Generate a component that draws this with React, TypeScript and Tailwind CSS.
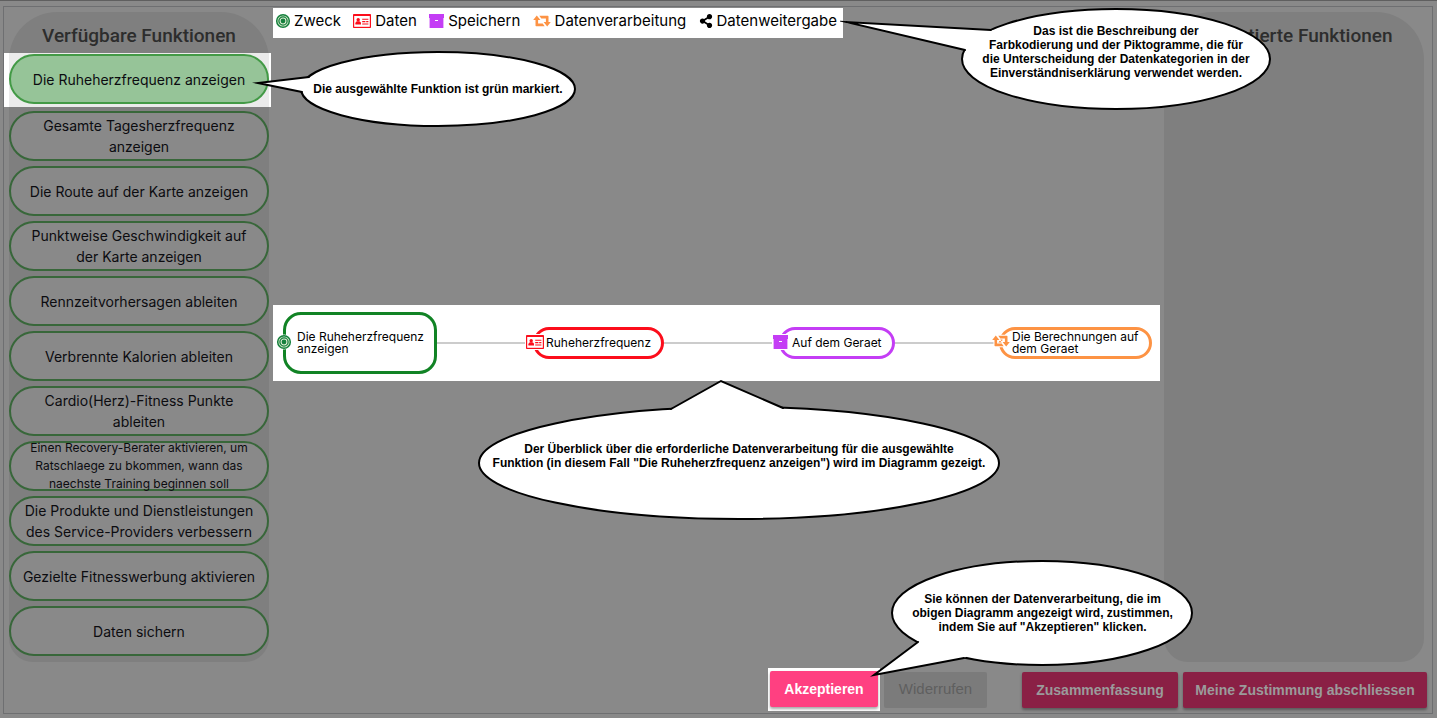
import type { ReactNode } from "react";
import { FaShareAlt } from "react-icons/fa";

const functions = [
  { label: "Gesamte Tagesherzfrequenz anzeigen" },
  { label: "Die Route auf der Karte anzeigen" },
  { label: "Punktweise Geschwindigkeit auf der Karte anzeigen" },
  { label: "Rennzeitvorhersagen ableiten" },
  { label: "Verbrennte Kalorien ableiten" },
  { label: "Cardio(Herz)-Fitness Punkte ableiten" },
  {
    label:
      "Einen Recovery-Berater aktivieren, um Ratschlaege zu bkommen, wann das naechste Training beginnen soll",
    small: true,
  },
  { label: "Die Produkte und Dienstleistungen des Service-Providers verbessern" },
  { label: "Gezielte Fitnesswerbung aktivieren" },
  { label: "Daten sichern" },
];

function TargetIcon() {
  return (
    <svg viewBox="0 0 14 14" className="size-3.5 shrink-0 overflow-visible" aria-hidden="true">
      <circle cx="7" cy="7" r="7.4" fill="#fff" />
      <circle cx="7" cy="7" r="6.3" fill="#d3e6c8" stroke="#15803d" strokeWidth="1.5" />
      <circle cx="7" cy="7" r="4.1" fill="#e4efd8" stroke="#15803d" strokeWidth="1.3" />
      <circle cx="7" cy="7" r="2.4" fill="#15803d" />
    </svg>
  );
}

function CardIcon() {
  return (
    <svg viewBox="0 0 18 14" className="h-3.5 w-4.5 shrink-0" aria-hidden="true">
      <rect width="18" height="14" rx="0.8" fill="#fc0d1b" />
      <rect x="1.2" y="2" width="15.6" height="10.8" fill="#fff" />
      <circle cx="5.2" cy="5.7" r="1.7" fill="#fc0d1b" />
      <path d="M2.4 10.6V9.3q0-1.7 1.6-2h2.4q1.6.3 1.6 2v1.3z" fill="#fc0d1b" />
      <path d="M9.2 5.2h6.2M9.2 7.6h3.2M13.2 7.6h2.2M9.2 10h6.2" stroke="#fc0d1b" strokeWidth="1.1" />
    </svg>
  );
}

function ArchiveIcon() {
  return (
    <svg viewBox="0 0 15 14" className="h-3.5 w-[15px] shrink-0" aria-hidden="true">
      <path d="M0 0h15v4H0zM.6 3h13.8v11H.6z" fill="#c43df5" />
      <path d="M6 6.5h3" stroke="#fff" strokeWidth="1" />
    </svg>
  );
}

function RepeatIcon() {
  return (
    <svg viewBox="0 0 18 14" className="h-3.5 w-4.5 shrink-0 overflow-visible" aria-hidden="true">
      <path
        d="M3.8 1.4 7.4 6H5.1v3.6h4.6l2 2.6H3.2q-.7 0-.7-.7V6H.2zM14.2 12.6 10.6 8h2.3V4.4H8.3l-2-2.6h8.5q.7 0 .7.7V8h2.3z"
        fill="#fd9344"
        stroke="#fff"
        strokeWidth="2"
        paintOrder="stroke"
      />
    </svg>
  );
}

function Legend({ icon, children }: { icon: ReactNode; children: ReactNode }) {
  return (
    <li className="flex items-center gap-1">
      {icon}
      {children}
    </li>
  );
}

function Bubble({
  place,
  viewBox,
  ellipse,
  tail,
  textClass,
  children,
}: {
  place: string;
  viewBox: string;
  ellipse: [number, number, number, number];
  tail: string;
  textClass: string;
  children: ReactNode;
}) {
  return (
    <div className={`pointer-events-none absolute z-20 ${place}`} role="note">
      <svg viewBox={viewBox} className="absolute inset-0 size-full" aria-hidden="true">
        <ellipse
          cx={ellipse[0]}
          cy={ellipse[1]}
          rx={ellipse[2]}
          ry={ellipse[3]}
          fill="#fff"
          stroke="#000"
          strokeWidth="2"
        />
        <polygon points={`${tail} ${ellipse[0]},${ellipse[1]}`} fill="#fff" />
        <polyline
          points={tail}
          fill="none"
          stroke="#000"
          strokeWidth="2"
          strokeMiterlimit="12"
          strokeLinecap="round"
        />
      </svg>
      <p
        className={`relative text-center font-['Liberation_Sans',Arial,sans-serif] text-xs/[14px] font-bold whitespace-nowrap text-black ${textClass}`}
      >
        {children}
      </p>
    </div>
  );
}

function Node({
  size,
  icon,
  iconClass,
  children,
}: {
  size: string;
  icon: ReactNode;
  iconClass: string;
  children: ReactNode;
}) {
  return (
    <div className={`relative flex shrink-0 items-center border-3 bg-white ${size}`}>
      <span className={`absolute ${iconClass}`}>{icon}</span>
      <span className="text-xs/3 text-black">{children}</span>
    </div>
  );
}

const pill =
  "flex h-[50px] w-full items-center justify-center rounded-full border-2 px-2.5 text-center";
const heading =
  "flex h-[41px] items-center justify-center pt-1.5 text-[19px]/6 font-medium font-[Roboto,sans-serif] text-[#2d2d2d]";
const action =
  "h-9 rounded-xs font-['Liberation_Sans',Arial,sans-serif] text-sm font-bold whitespace-nowrap";
const dimmed = "bg-[#8a2045] text-[#9b9b9b] shadow-[0_2px_3px_rgba(0,0,0,0.35)]";

export default function App() {
  return (
    <div className="flex min-h-screen flex-col border-t border-[#5f5f5f] bg-[#898989] font-[Inter,sans-serif] text-[#0c0c10]">
      <main className="mt-[5px] mr-1 mb-1 ml-[3px] flex grow flex-col border border-[#6e6f71]">
        <div className="flex grow items-stretch pl-[5px]">
          <section className="mt-[5px] w-[260px] shrink-0 rounded-t-[48px] rounded-b-3xl bg-[#7f7f7f] pb-1.5">
            <h2 className={heading}>Verfügbare Funktionen</h2>
            <div className="relative -mr-0.5 -ml-[5px] border-r-2 border-l-[5px] border-white bg-[#ebebeb] pt-px pb-[3px]">
              <button type="button" className={`${pill} border-[#439a46] bg-[#96c498] text-sm/[21px]`}>
                Die Ruheherzfrequenz anzeigen
              </button>
              <Bubble
                place="-top-[5px] left-[243px] h-[82px] w-[328px]"
                viewBox="252 48 328 82"
                ellipse={[438, 89, 137, 37]}
                tail="309,77 258,83 302,92"
                textClass="mt-[34px] pl-11"
              >
                Die ausgewählte Funktion ist grün markiert.
              </Bubble>
            </div>
            <ul className="mt-1 flex flex-col gap-[5px]">
              {functions.map((item) => (
                <li key={item.label}>
                  <button
                    type="button"
                    className={`${pill} border-[#38673a] bg-[#898989] ${item.small ? "text-xs/[18px]" : "text-sm/[21px]"}`}
                  >
                    {item.label}
                  </button>
                </li>
              ))}
            </ul>
          </section>

          <section className="mr-1 ml-1 min-w-0 grow pt-px">
            <div className="relative w-[570px] bg-white">
              <ul className="flex h-[30px] items-center justify-between pr-1.5 pb-1 pl-[3px] text-[15px] whitespace-nowrap text-black">
                <Legend icon={<TargetIcon />}>Zweck</Legend>
                <Legend icon={<CardIcon />}>Daten</Legend>
                <Legend icon={<ArchiveIcon />}>Speichern</Legend>
                <Legend icon={<RepeatIcon />}>Datenverarbeitung</Legend>
                <Legend icon={<FaShareAlt className="size-3.5" aria-hidden="true" />}>Datenweitergabe</Legend>
              </ul>
              <Bubble
                place="-top-1 left-[567px] h-[110px] w-[434px]"
                viewBox="840 4 434 110"
                ellipse={[1116, 59, 154, 50]}
                tail="991,30 846,22 965,50"
                textClass="mt-5 pl-[118px]"
              >
                Das ist die Beschreibung der
                <br />
                Farbkodierung und der Piktogramme, die für
                <br />
                die Unterscheidung der Datenkategorien in der
                <br />
                Einverständniserklärung verwendet werden.
              </Bubble>
            </div>

            <div className="relative mt-[267px] flex h-[76px] items-center bg-white pr-2 pl-2.5">
              <Node
                size="h-[62px] w-[154px] rounded-[18px] border-[#118325] pl-[11px]"
                icon={<TargetIcon />}
                iconClass="-left-[9px] top-5"
              >
                Die Ruheherzfrequenz anzeigen
              </Node>
              <div className="h-0.5 flex-[96] bg-[#cccccc]" />
              <Node
                size="h-8 w-[131px] rounded-full border-[#fc0d1b] pl-2.5"
                icon={<CardIcon />}
                iconClass="-left-[11px] top-1 border border-white bg-white"
              >
                Ruheherzfrequenz
              </Node>
              <div className="h-0.5 flex-[115] bg-[#cccccc]" />
              <Node
                size="h-8 w-[116px] rounded-full border-[#c43df5] pl-2.5"
                icon={<ArchiveIcon />}
                iconClass="-left-[10px] top-1 border border-white bg-white"
              >
                Auf dem Geraet
              </Node>
              <div className="h-0.5 flex-[104] bg-[#cccccc]" />
              <Node
                size="h-8 w-[153px] rounded-full border-[#fd9344] pl-2.5"
                icon={<RepeatIcon />}
                iconClass="-left-[10px] top-1"
              >
                Die Berechnungen auf dem Geraet
              </Node>
              <Bubble
                place="top-[71px] left-[201px] h-[148px] w-[530px]"
                viewBox="474 376 530 148"
                ellipse={[739, 463, 260, 56]}
                tail="671,409 721,381 783,408"
                textClass="mt-[66px]"
              >
                Der Überblick über die erforderliche Datenverarbeitung für die ausgewählte
                <br />
                Funktion (in diesem Fall "Die Ruheherzfrequenz anzeigen") wird im Diagramm gezeigt.
              </Bubble>
            </div>
          </section>

          <section className="mt-[5px] mr-2 w-[260px] shrink-0 rounded-t-[48px] rounded-b-3xl bg-[#7f7f7f]">
            <h2 className={heading}>Akzeptierte Funktionen</h2>
          </section>
        </div>

        <div className="mt-1.5 mb-0.5 flex items-center justify-end pr-[5px]">
          <div className="relative bg-white px-0.5 pt-[3px] pb-1">
            <button
              type="button"
              className={`${action} block w-[108px] bg-[#ff4081] text-white shadow-[0_2px_3px_rgba(0,0,0,0.35)]`}
            >
              Akzeptieren
            </button>
            <Bubble
              place="-top-28 left-[102px] h-[124px] w-[327px]"
              viewBox="870 556 327 124"
              ellipse={[1042, 613, 150, 52]}
              tail="918,642 874,675 964,658"
              textClass="mt-9 pl-[18px]"
            >
              Sie können der Datenverarbeitung, die im
              <br />
              obigen Diagramm angezeigt wird, zustimmen,
              <br />
              indem Sie auf "Akzeptieren" klicken.
            </Bubble>
          </div>
          <button
            type="button"
            disabled
            className="mr-[35px] ml-1 h-9 w-[103px] rounded-xs bg-[#7b7b7b] font-['Liberation_Sans',Arial,sans-serif] text-[15px] text-[#5f5f5f]"
          >
            Widerrufen
          </button>
          <button type="button" className={`${action} ${dimmed} mr-[5px] w-[156px]`}>
            Zusammenfassung
          </button>
          <button type="button" className={`${action} ${dimmed} w-[244px]`}>
            Meine Zustimmung abschliessen
          </button>
        </div>
      </main>
    </div>
  );
}
